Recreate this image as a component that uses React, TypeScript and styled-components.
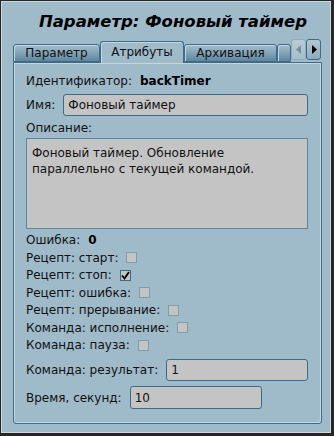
import styled, { createGlobalStyle } from 'styled-components';

const GlobalStyle = createGlobalStyle`
  html, body {
    margin: 0;
    padding: 0;
    background: #2a2522;
  }
  * {
    box-sizing: border-box;
  }
`;

const checks = [
  { label: 'Рецепт: старт:', checked: false },
  { label: 'Рецепт: стоп:', checked: true },
  { label: 'Рецепт: ошибка:', checked: false },
  { label: 'Рецепт: прерывание:', checked: false },
  { label: 'Команда: исполнение:', checked: false },
  { label: 'Команда: пауза:', checked: false },
];

export default function App() {
  return (
    <>
      <GlobalStyle />
      <Window>
        <Title>Параметр: Фоновый таймер</Title>
        <TabBar>
          <Tab $w={87}>Параметр</Tab>
          <Tab $w={84} $active>
            Атрибуты
          </Tab>
          <Tab $w={93}>Архивация</Tab>
          <Tab $w={14} />
          <ScrollButton $disabled>
            <svg width="6" height="9" viewBox="0 0 6 9">
              <path d="M5 0 L0 4.5 L5 9 Z" fill="#7f8f98" />
            </svg>
          </ScrollButton>
          <ScrollButton>
            <svg width="6" height="9" viewBox="0 0 6 9">
              <path d="M1 0 L6 4.5 L1 9 Z" fill="#000" />
            </svg>
          </ScrollButton>
        </TabBar>
        <Panel>
          <Row $h={18}>
            <Label>Идентификатор:</Label>
            <Value>backTimer</Value>
          </Row>
          <Row $h={22} $mt={4}>
            <Label>Имя:</Label>
            <Field $w={246}>Фоновый таймер</Field>
          </Row>
          <Row $h={16} $mt={4}>
            <Label>Описание:</Label>
          </Row>
          <TextArea>
            Фоновый таймер. Обновление
            <br />
            параллельно с текущей командой.
          </TextArea>
          <Row $h={18} $mt={2}>
            <Label>Ошибка:</Label>
            <Value>0</Value>
          </Row>
          {checks.map((c) => (
            <Row key={c.label} $h={17.5}>
              <Label>{c.label}</Label>
              <CheckBox $checked={c.checked}>
                {c.checked && (
                  <svg width="9" height="9" viewBox="0 0 9 9">
                    <path
                      d="M1 4.5 L3.5 7.5 L8 1"
                      stroke="#000"
                      strokeWidth="1.8"
                      fill="none"
                    />
                  </svg>
                )}
              </CheckBox>
            </Row>
          ))}
          <Row $h={22} $mt={5}>
            <Label>Команда: результат:</Label>
            <Field $w={142}>1</Field>
          </Row>
          <Row $h={23} $mt={5}>
            <Label>Время, секунд:</Label>
            <Field $w={132}>10</Field>
          </Row>
        </Panel>
      </Window>
    </>
  );
}

const Window = styled.div`
  width: 334px;
  height: 436px;
  background: #9fbac9;
  border-top: 1px solid #2a2522;
  border-left: 1px solid #2a2522;
  border-right: 3px solid #2a2522;
  border-bottom: 3px solid #2a2522;
  box-shadow: inset 1px 1px 0 #c9d9e2, inset -1px -1px 0 #c9d9e2;
  padding: 10px 10px 0 12px;
  font-family: 'DejaVu Sans', sans-serif;
  color: #111;
`;

const Title = styled.h1`
  margin: 0 0 0 22px;
  height: 30px;
  text-align: center;
  font-size: 16.5px;
  font-weight: bold;
  font-style: italic;
  line-height: 22px;
  color: #000;
  width: 276px;
  white-space: nowrap;
`;

const TabBar = styled.div`
  display: flex;
  align-items: flex-end;
  height: 21px;
  width: 309px;
`;

const Tab = styled.div<{ $active?: boolean; $w: number }>`
  flex: 0 0 ${(p) => p.$w}px;
  height: ${(p) => (p.$active ? '22px' : '18px')};
  text-align: center;
  font-size: 12px;
  line-height: ${(p) => (p.$active ? '21px' : '17px')};
  color: #111;
  white-space: nowrap;
  border: 1px solid #3e6c88;
  border-bottom: ${(p) => (p.$active ? 'none' : '1px solid #3e6c88')};
  border-radius: 3px 3px 0 0;
  margin-bottom: ${(p) => (p.$active ? '-1px' : '0')};
  position: relative;
  z-index: ${(p) => (p.$active ? 1 : 0)};
  background: ${(p) =>
    p.$active
      ? '#9fbac9'
      : 'linear-gradient(to bottom, #a4bfcd 0%, #86a6b8 45%, #5e87a0 100%)'};
  box-shadow: inset 1px 1px 0 #c4d6e0;
`;

const ScrollButton = styled.div<{ $disabled?: boolean }>`
  flex: 0 0 15px;
  height: 21px;
  margin-bottom: 2px;
  display: flex;
  align-items: center;
  justify-content: center;
  border: 1px solid ${(p) => (p.$disabled ? '#8eaabb' : '#3e6c88')};
  border-radius: 3px;
  background: ${(p) =>
    p.$disabled
      ? 'linear-gradient(to bottom, #b8ccd7, #a6bfcc)'
      : 'linear-gradient(to bottom, #b2c8d4, #8eacbe)'};
`;

const Panel = styled.div`
  width: 309px;
  height: 362px;
  border: 1px solid #3e6c88;
  box-shadow: inset 1px 1px 0 #c4d6e0, inset -1px -1px 0 #c4d6e0;
  border-radius: 0 0 3px 3px;
  padding: 9px 13px 0 12px;
  display: flex;
  flex-direction: column;
`;

const Row = styled.div<{ $h: number; $mt?: number }>`
  display: flex;
  align-items: center;
  gap: 8px;
  height: ${(p) => p.$h}px;
  margin-top: ${(p) => p.$mt ?? 0}px;
  flex-shrink: 0;
`;

const Label = styled.span`
  font-size: 12px;
  white-space: nowrap;
  color: #111;
`;

const Value = styled.span`
  font-size: 12px;
  font-weight: bold;
  color: #000;
`;

const Field = styled.div<{ $w: number }>`
  width: ${(p) => p.$w}px;
  height: 100%;
  background: #c4c4c4;
  border: 1px solid #3e6c88;
  border-radius: 3px;
  padding: 0 4px;
  font-size: 12px;
  display: flex;
  align-items: center;
  color: #111;
`;

const TextArea = styled.div`
  width: 282px;
  height: 91px;
  margin-top: 2px;
  flex-shrink: 0;
  background: #c4c4c4;
  border: 1px solid #5a87a2;
  padding: 6px 5px;
  font-size: 12px;
  line-height: 16px;
  color: #111;
`;

const CheckBox = styled.div<{ $checked?: boolean }>`
  width: 11px;
  height: 11px;
  background: #c4c4c4;
  border: 1px solid ${(p) => (p.$checked ? '#3e6c88' : '#7d9cae')};
  display: flex;
  align-items: center;
  justify-content: center;
`;
